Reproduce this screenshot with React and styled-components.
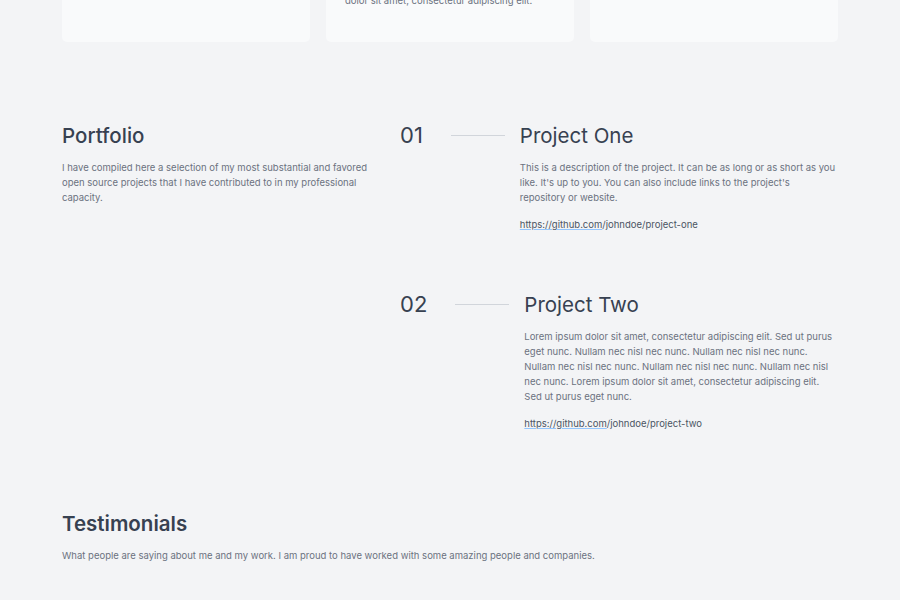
import React from "react";
import styled, { createGlobalStyle } from "styled-components";

const GlobalStyle = createGlobalStyle`
  * { box-sizing: border-box; }
  body {
    margin: 0;
    background: #f3f4f6;
    font-family: Inter, "Noto Sans", "Liberation Sans", sans-serif;
    overflow: hidden;
  }
`;

const services = [
  {
    title: "Open Source",
    text: ["Lorem ipsum dolor sit amet, consectetur", "adipiscing elit."],
  },
  {
    title: "Consulting",
    text: [
      "Lorem ipsum dolor sit amet, consectetur",
      "adipiscing elit. Sed ut purus eget nunc. Lorem ipsum",
      "dolor sit amet, consectetur adipiscing elit.",
    ],
  },
  {
    title: "Mentoring",
    text: ["Lorem ipsum dolor sit amet, consectetur", "adipiscing elit."],
  },
];

const projects = [
  {
    num: "01",
    title: "Project One",
    text: "This is a description of the project. It can be as long or as short as you like. It's up to you. You can also include links to the project's repository or website.",
    repo: "project-one",
  },
  {
    num: "02",
    title: "Project Two",
    text: "Lorem ipsum dolor sit amet, consectetur adipiscing elit. Sed ut purus eget nunc. Nullam nec nisl nec nunc. Nullam nec nisl nec nunc. Nullam nec nisl nec nunc. Nullam nec nisl nec nunc. Nullam nec nisl nec nunc. Lorem ipsum dolor sit amet, consectetur adipiscing elit. Sed ut purus eget nunc.",
    repo: "project-two",
  },
];

const App = () => {
  return (
    <>
      <GlobalStyle />
      <Container>
        <ServiceGrid>
          {services.map((s) => (
            <ServiceCard key={s.title}>
              <ServiceTitle>{s.title}</ServiceTitle>
              <Text>
                {s.text.map((line) => (
                  <Line key={line}>{line}</Line>
                ))}
              </Text>
            </ServiceCard>
          ))}
        </ServiceGrid>

        <Portfolio>
          <div>
            <Heading>Portfolio</Heading>
            <Text>
              I have compiled here a selection of my most substantial and
              favored open source projects that I have contributed to in my
              professional capacity.
            </Text>
          </div>
          <ProjectList>
            {projects.map((p) => (
              <Project key={p.num}>
                <Num>{p.num}</Num>
                <Rule />
                <ProjectTitle>{p.title}</ProjectTitle>
                <ProjectBody>
                  <Text>{p.text}</Text>
                  <RepoLink href="#">
                    <span>https://github.com</span>/johndoe/{p.repo}
                  </RepoLink>
                </ProjectBody>
              </Project>
            ))}
          </ProjectList>
        </Portfolio>

        <Testimonials>
          <Heading $bold>Testimonials</Heading>
          <Text>
            What people are saying about me and my work. I am proud to have
            worked with some amazing people and companies.
          </Text>
        </Testimonials>
      </Container>
    </>
  );
};

export default App;

const Container = styled.main`
  width: 776px;
  margin: 0 auto;
`;

const ServiceGrid = styled.div`
  display: grid;
  grid-template-columns: repeat(3, minmax(0, 1fr));
  gap: 16px;
  margin-top: -85px;
`;

const ServiceCard = styled.div`
  background: #f9fafb;
  border-radius: 5px;
  padding: 19px 19px 34px;
`;

const ServiceTitle = styled.h3`
  margin: 0 0 10px;
  font-size: 15px;
  font-weight: 600;
  color: #374151;
`;

const Text = styled.p`
  margin: 0;
  font-size: 9.5px;
  line-height: 15px;
  color: #6b7280;
`;

const Line = styled.span`
  display: block;
  white-space: nowrap;
  overflow: hidden;
`;

const Heading = styled.h2`
  margin: 0 0 11px;
  font-size: 20.5px;
  line-height: 27px;
  font-weight: ${({ $bold }) => ($bold ? 600 : 500)};
  color: #374151;
`;

const Portfolio = styled.section`
  display: grid;
  grid-template-columns: 320px minmax(0, 1fr);
  gap: 18px;
  margin-top: 80px;
`;

const ProjectList = styled.div`
  display: flex;
  flex-direction: column;
  gap: 59px;
`;

const Project = styled.article`
  display: grid;
  grid-template-columns: auto 97px minmax(0, 1fr);
  align-items: center;
`;

const Num = styled.span`
  font-size: 22px;
  line-height: 27px;
  color: #374151;
`;

const Rule = styled.span`
  height: 1px;
  background: #d1d5db;
  margin: 0 15px 0 28px;
`;

const ProjectTitle = styled.h3`
  margin: 0;
  font-size: 20.5px;
  line-height: 27px;
  font-weight: 400;
  color: #374151;
`;

const ProjectBody = styled.div`
  grid-column: 3;
  margin-top: 11px;
  display: flex;
  flex-direction: column;
  gap: 12px;
`;

const RepoLink = styled.a`
  font-size: 9.5px;
  line-height: 15px;
  color: #4b5563;
  text-decoration: none;
  span {
    text-decoration: underline;
    text-decoration-color: #93c5fd;
  }
`;

const Testimonials = styled.section`
  margin-top: 79px;
`;
